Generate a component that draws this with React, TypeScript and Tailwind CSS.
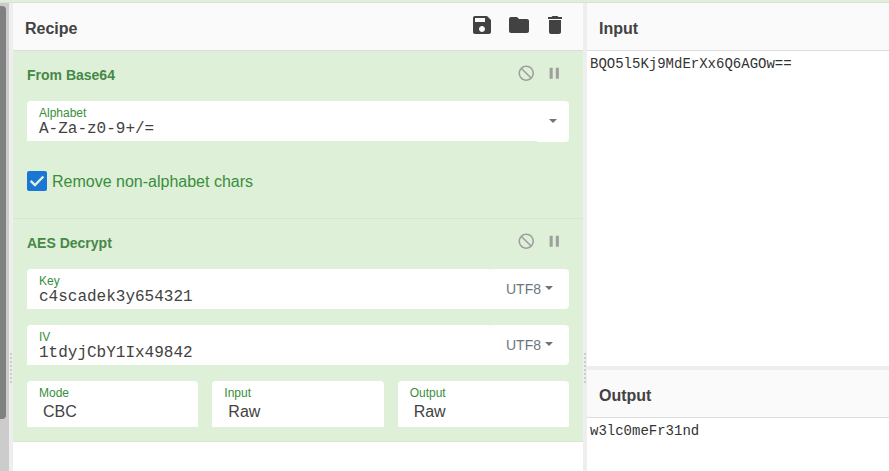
import type { ReactNode } from "react";

const MONO = "font-['Liberation_Mono',monospace]";

function Icon({ d, className }: { d: string; className: string }) {
  return (
    <svg viewBox="0 0 24 24" className={`block shrink-0 fill-current ${className}`} aria-hidden="true">
      <path d={d} />
    </svg>
  );
}

const SAVE =
  "M17 3H5c-1.11 0-2 .9-2 2v14c0 1.1.89 2 2 2h14c1.1 0 2-.9 2-2V7l-4-4zm-5 16c-1.66 0-3-1.34-3-3s1.34-3 3-3 3 1.34 3 3-1.34 3-3 3zm3-10H5V5h10v4z";
const FOLDER = "M10 4H4c-1.1 0-1.99.9-1.99 2L2 18c0 1.1.9 2 2 2h16c1.1 0 2-.9 2-2V8c0-1.1-.9-2-2-2h-8l-2-2z";
const TRASH = "M6 19c0 1.1.9 2 2 2h8c1.1 0 2-.9 2-2V7H6v12zM19 4h-3.5l-1-1h-5l-1 1H5v2h14V4z";
const DISABLE =
  "M12 2C6.48 2 2 6.48 2 12s4.48 10 10 10 10-4.48 10-10S17.52 2 12 2zm0 18c-4.42 0-8-3.58-8-8 0-1.85.63-3.55 1.69-4.9L16.9 18.31C15.55 19.37 13.85 20 12 20zm6.31-3.1L7.1 5.69C8.45 4.63 10.15 4 12 4c4.42 0 8 3.58 8 8 0 1.85-.63 3.55-1.69 4.9z";
const PAUSE = "M6 19h4V5H6v14zm8-14v14h4V5h-4z";

function Title({ children, actions }: { children: ReactNode; actions?: ReactNode }) {
  return (
    <div className="flex h-12 shrink-0 justify-between border-b border-[#ddd] bg-[#fafafa] pl-3">
      <h2 className="pt-3.5 text-base leading-6 font-bold">{children}</h2>
      {actions}
    </div>
  );
}

function Operation({ name, className, children }: { name: string; className: string; children: ReactNode }) {
  return (
    <section className={`shrink-0 border-b border-[#d6e9c6] bg-[#dff0d8] px-3.5 ${className}`}>
      <div className="flex h-[50px] justify-between pt-3.5">
        <h3 className="text-sm leading-5 font-bold text-[#468847]">{name}</h3>
        <div className="flex gap-[9px] pr-1.5 text-[#9e9e9e]">
          <Icon d={DISABLE} className="-mt-[1.5px] size-[18.5px]" />
          <Icon d={PAUSE} className="-mt-[1.5px] size-[18.5px]" />
        </div>
      </div>
      {children}
    </section>
  );
}

function Caret() {
  return (
    <svg viewBox="0 0 8 4" className="block h-1 w-2 fill-[#6c757d]" aria-hidden="true">
      <path d="M0 0h8L4 4z" />
    </svg>
  );
}

function Label({ children }: { children: ReactNode }) {
  return <div className="h-[18px] pt-[5px] text-xs leading-[14px] text-[#388e3c]">{children}</div>;
}

function TextField({ label, value, encoding }: { label: string; value: string; encoding: string }) {
  return (
    <div className="mb-4 flex h-10">
      <div className="w-[463px] rounded-tl rounded-tr-[2px] bg-white pl-3">
        <Label>{label}</Label>
        <div className={`text-base leading-5 ${MONO}`}>{value}</div>
      </div>
      <div className="flex flex-1 items-center gap-1 rounded-r bg-white pl-4 text-sm text-[#6c757d]">
        <span>{encoding}</span>
        <span className="-mt-0.5">
          <Caret />
        </span>
      </div>
    </div>
  );
}

function SelectField({ label, value }: { label: string; value: string }) {
  return (
    <div className="h-[46px] flex-1 rounded-t bg-white pl-3">
      <Label>{label}</Label>
      <div className="pl-1 text-base leading-[25px]">{value}</div>
    </div>
  );
}

function Gutter() {
  return (
    <div className="w-1 shrink-0 bg-[#eee] pt-[350px] pl-px">
      <div className="flex w-0.5 flex-col gap-0.5">
        {Array.from({ length: 8 }, (_, i) => (
          <i key={i} className="block size-0.5 bg-[#ccc]" />
        ))}
      </div>
    </div>
  );
}

export default function App() {
  return (
    <div className="flex h-[471px] w-[889px] flex-col overflow-hidden bg-white font-['Liberation_Sans',Arial,sans-serif] text-[#424242]">
      <div className="h-[3px] shrink-0 border-b border-[#ddd] bg-[#dff0d8]" />
      <div className="flex min-h-0 flex-1">
        <div className="w-[9px] shrink-0 bg-[#ccc] pt-[3px]">
          <div className="h-[413px] w-1.5 rounded-r bg-[#7f8181]" />
        </div>
        <Gutter />
        <main className="flex w-[570px] shrink-0 flex-col">
          <Title
            actions={
              <div className="flex gap-3 pt-2.5 pr-4">
                <Icon d={SAVE} className="mr-px size-6" />
                <Icon d={FOLDER} className="size-6" />
                <Icon d={TRASH} className="size-6" />
              </div>
            }
          >
            Recipe
          </Title>
          <Operation name="From Base64" className="h-[168px]">
            <div className="flex h-[41px]">
              <div className="h-10 w-[510px] rounded-tl bg-white pl-3">
                <Label>Alphabet</Label>
                <div className={`text-base leading-5 ${MONO}`}>A-Za-z0-9+/=</div>
              </div>
              <div className="flex flex-1 items-center justify-center rounded-r bg-white pb-0.5">
                <Caret />
              </div>
            </div>
            <label className="mt-[29px] flex h-5 items-center gap-[5px] text-[#388e3c]">
              <span className="size-5 rounded-[2px] bg-[#1976d2]">
                <svg viewBox="0 0 20 20" className="size-5 fill-none stroke-[#dff0d8] stroke-[2.4]" aria-hidden="true">
                  <path d="M3.6 9.8l4.4 4.3 8.4-8.6" />
                </svg>
              </span>
              <span className="pt-0.5 text-base leading-5">Remove non-alphabet chars</span>
            </label>
          </Operation>
          <Operation name="AES Decrypt" className="h-[223px]">
            <TextField label="Key" value="c4scadek3y654321" encoding="UTF8" />
            <TextField label="IV" value="1tdyjCbY1Ix49842" encoding="UTF8" />
            <div className="flex gap-3.5">
              <SelectField label="Mode" value="CBC" />
              <SelectField label="Input" value="Raw" />
              <SelectField label="Output" value="Raw" />
            </div>
          </Operation>
        </main>
        <Gutter />
        <aside className="flex min-w-0 flex-1 flex-col">
          <section className="h-[363px] shrink-0">
            <Title>Input</Title>
            <div className={`px-[3px] pt-[3px] text-sm leading-5 text-[#333] ${MONO}`}>BQO5l5Kj9MdErXx6Q6AGOw==</div>
          </section>
          <div className="h-1 shrink-0 bg-[#eee]" />
          <section>
            <Title>Output</Title>
            <div className={`px-[3px] pt-[3px] text-sm leading-5 text-[#333] ${MONO}`}>w3lc0meFr31nd</div>
          </section>
        </aside>
      </div>
    </div>
  );
}
